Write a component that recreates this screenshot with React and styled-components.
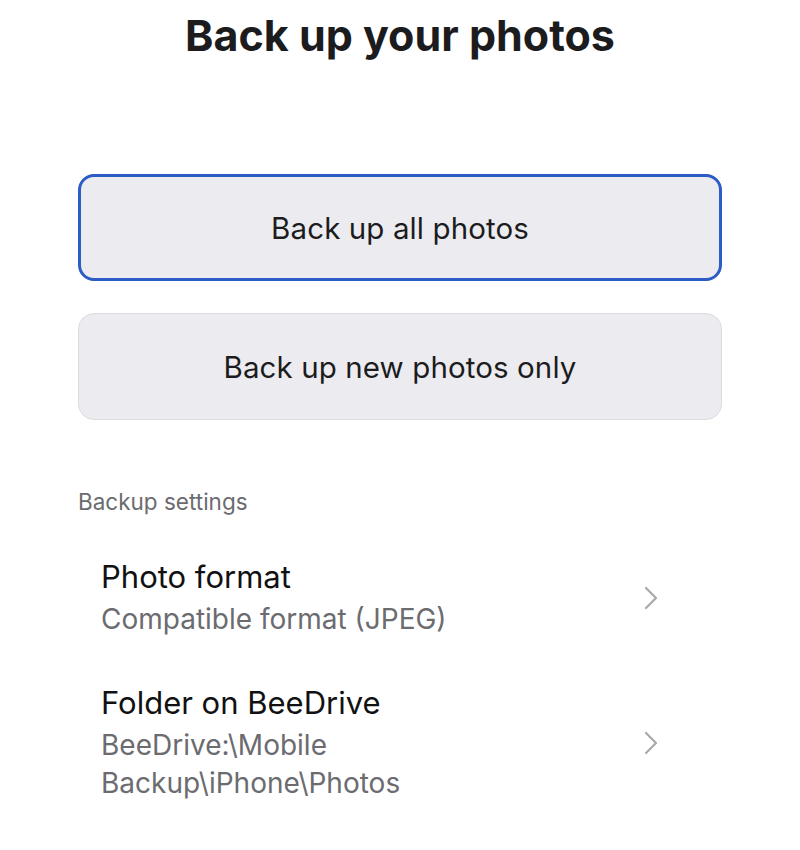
import React from 'react';
import styled, { createGlobalStyle } from 'styled-components';

const GlobalStyle = createGlobalStyle`
  body {
    margin: 0;
    background: #ffffff;
    font-family: Inter, "Noto Sans", "Liberation Sans", sans-serif;
    color: #1c1c1e;
  }
`;

const Page = styled.div`
  width: 800px;
  height: 850px;
  box-sizing: border-box;
  padding: 0 78px;
  display: flex;
  flex-direction: column;
  overflow: hidden;
`;

const Title = styled.h1`
  margin: 7px 0 0;
  font-size: 43px;
  line-height: 56px;
  font-weight: 700;
  text-align: center;
  letter-spacing: 0;
`;

const Options = styled.div`
  display: flex;
  flex-direction: column;
  gap: 32px;
  margin-top: 111px;
`;

const Option = styled.button`
  height: 107px;
  width: 100%;
  box-sizing: border-box;
  border-radius: 16px;
  background: #ececf0;
  border: ${p => (p.selected ? '3px solid #2c5cc5' : '1.5px solid #dddde1')};
  font-family: inherit;
  font-size: 29.5px;
  font-weight: 400;
  color: #1c1c1e;
  letter-spacing: 0.1px;
  cursor: pointer;
`;

const SectionLabel = styled.div`
  margin-top: 68px;
  font-size: 22.5px;
  line-height: 28px;
  color: #6b6b70;
`;

const List = styled.div`
  display: flex;
  flex-direction: column;
  gap: 46px;
  margin-top: 42px;
  padding: 0 64px 0 23px;
`;

const Row = styled.div`
  display: flex;
  align-items: center;
  justify-content: space-between;
`;

const RowText = styled.div`
  display: flex;
  flex-direction: column;
`;

const RowTitle = styled.div`
  font-size: 31px;
  line-height: 38px;
  color: #111113;
  letter-spacing: 0;
`;

const RowValue = styled.div`
  font-size: 28px;
  line-height: 38px;
  color: #6b6b70;
  letter-spacing: 0;
  margin-top: 4px;
`;

const Chevron = () => (
  <svg width="14" height="24" viewBox="0 0 14 24" fill="none">
    <path d="M2 2 L12 12 L2 22" stroke="#a8a8ad" strokeWidth="2.2" strokeLinecap="round" strokeLinejoin="round" />
  </svg>
);

const settings = [
  { title: 'Photo format', value: ['Compatible format (JPEG)'] },
  { title: 'Folder on BeeDrive', value: ['BeeDrive:\\Mobile', 'Backup\\iPhone\\Photos'] },
];

export default function App() {
  return (
    <Page>
      <GlobalStyle />
      <Title>Back up your photos</Title>
      <Options>
        <Option selected>Back up all photos</Option>
        <Option>Back up new photos only</Option>
      </Options>
      <SectionLabel>Backup settings</SectionLabel>
      <List>
        {settings.map(s => (
          <Row key={s.title}>
            <RowText>
              <RowTitle>{s.title}</RowTitle>
              <RowValue>
                {s.value.map(v => (
                  <div key={v}>{v}</div>
                ))}
              </RowValue>
            </RowText>
            <Chevron />
          </Row>
        ))}
      </List>
    </Page>
  );
}
